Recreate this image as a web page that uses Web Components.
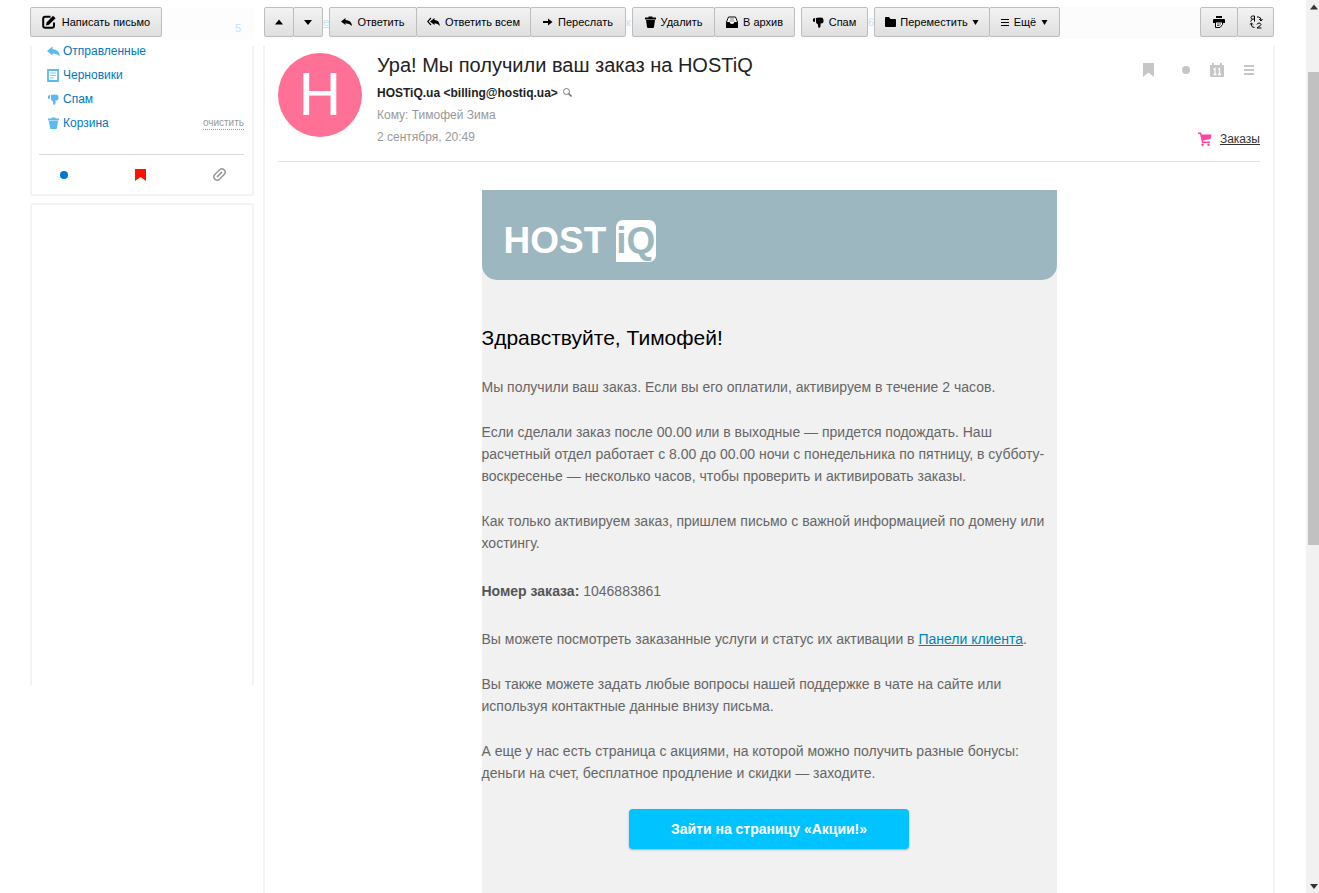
<!DOCTYPE html>
<html lang="ru">
<head>
<meta charset="utf-8">
<title>Ура! Мы получили ваш заказ на HOSTiQ</title>
<style>
    body {
        margin: 0;
        background: #fff;
        font-family: "Liberation Sans", Arial, sans-serif;
        font-size: 12px;
    }
</style>
</head>
<body>
<mail-app>
    <mail-toolbar slot="toolbar"></mail-toolbar>
    <mail-sidebar slot="sidebar"></mail-sidebar>
    <mail-letter slot="letter">
        <host-newsletter></host-newsletter>
    </mail-letter>
    <page-scroll slot="scroll"></page-scroll>
</mail-app>

<script>
const icons = {
    compose: [14, 14, '<path d="M8.500 1.800H3.200Q1.200 1.800 1.200 3.800V10.800Q1.200 12.800 3.200 12.800H10Q12 12.800 12 10.800V7.500" fill="none" stroke="currentColor" stroke-width="2"/><path d="M4 10.500L4.600 7.400L11 .8L13.600 3.200L7 9.800Z"/>'],
    up: [10, 8, '<path d="M1 6.500L5 1.500L9 6.500Z"/>'],
    down: [10, 8, '<path d="M1 2L5 7L9 2Z"/>'],
    caret: [7, 6, '<path d="M.5 1H6.500L3.500 6Z"/>'],
    reply: [11, 10, '<path d="M0 4.500L4.500 1V3Q10.500 3 11 9Q8.500 6.300 4.500 6.300V8Z"/>'],
    replyAll: [13, 10, '<path d="M3 4.500L7.500 1V3Q12.500 3 12.800 9Q11 6.300 7.500 6.300V8Z"/><path d="M4 1L.7 4.500L4 8" fill="none" stroke="currentColor" stroke-width="1.100"/>'],
    forward: [10, 10, '<path d="M0 4H5V1.500L9.500 5L5 8.500V6H0Z"/>'],
    trash: [11, 12, '<path d="M0 1.500H3.500V.5H7.500V1.500H11V3.500H0ZM1 4H10L9 11Q8.800 12 8 12H3Q2.200 12 2 11Z"/>'],
    archive: [12, 12, '<path d="M2.500 1H9.500L11.500 6V11H.5V6Z" fill="#fff" stroke="currentColor"/><path d="M0 6H3.500Q4 8 6 8T8.500 6H12V12H0Z"/><path d="M4 3H8M3.500 5H8.500" stroke="currentColor" opacity=".5"/>'],
    spam: [11, 11, '<path d="M0 1.800L2.200 1L1.800 5L0 4.500ZM3 1Q6 0 9.500 .8Q11 2.500 10.500 5Q10 6.500 7.500 6.500Q8 10.500 6 11Q4.800 10.500 5 7.500Q3.500 6.500 3 5.500Z"/>'],
    folder: [11, 10, '<path d="M0 1Q0 0 1 0H4L5.500 2H10Q11 2 11 3V9Q11 10 10 10H1Q0 10 0 9Z"/>'],
    lines: [8, 9, '<path d="M0 1.500H8M0 4.500H8M0 7.500H8" stroke="currentColor"/>'],
    print: [12, 12, '<path d="M3 0H9V2H3ZM0 4Q0 3 1 3H11Q12 3 12 4V7H0Z"/><path d="M2.500 6H9.500V8.500L7 11.500H2.500Z" fill="#fff" stroke="currentColor"/><path d="M4 8H8M4 9.500H6.500" stroke="currentColor" stroke-width=".7"/>'],
    translate: [14, 14, '<g fill="none" stroke="currentColor"><path d="M5.500 6.500V1H3.500Q2 1 2 2.500T3.500 4H5.500M3.500 4L1.500 6.500M8 9.500Q8.500 8 10 8T12 9.500Q12 10.500 8 13H12.500"/><path d="M8 2H9.500Q12 2 12 5.500M10.200 4L12 6L13.500 4M2.500 8.500V10Q2.500 12.500 5.500 12.500M.8 9.500L2.500 8L4 9.500"/></g>'],
    sent: [13, 11, '<path d="M0 5L5.500 .5V3Q12.500 3.500 13 10.500Q10 7.500 5.500 7.500V9.500Z"/>'],
    draft: [12, 13, '<path d="M1 1H11V12H1Z" fill="none" stroke="currentColor" stroke-width="1.800"/><path d="M3 4H9M3 6.500H9M3 9H7" stroke="currentColor" opacity=".8"/>'],
    dot: [8, 8, '<circle cx="4" cy="4" r="4"/>'],
    flag: [11, 12, '<path d="M0 0H11V12L5.500 8L0 12Z"/>'],
    clip: [15, 15, '<g transform="rotate(45 7.500 7.500)" fill="none" stroke="currentColor" stroke-width="1.500" stroke-linecap="round"><path d="M10.800 5V10.500Q10.800 14 7.500 14T4.200 10.500V4Q4.200 1 7.500 1T10.800 4V5M7.500 4.500V10.500"/></g>'],
    search: [9, 9, '<g fill="none" stroke="currentColor"><circle cx="3.500" cy="3.500" r="3"/><path d="M5.500 5.500L8.500 8.500" stroke-width="1.600"/></g>'],
    bookmark: [11, 14, '<path d="M0 0H11V14L5.500 9.500L0 14Z"/>'],
    calendar: [14, 14, '<path d="M0 2H2V0H4V2H10V0H12V2H14V13Q14 14 13 14H1Q0 14 0 13Z"/><path d="M3.500 6.500L5 5.500V11.500M8 6.500L9.500 5.500V11.500M3.500 11.500H6.500M8 11.500H11" fill="none" stroke="#fff" stroke-width="1.300"/>'],
    menu: [10, 10, '<path d="M0 1H10M0 5H10M0 9H10" stroke="currentColor" stroke-width="2"/>'],
    cart: [14, 14, '<path d="M0 .5H3L3.800 2.500H13.500L12.500 7L5 8.500L5.300 9.500H12V11H4L2 2H0Z"/><circle cx="4.500" cy="12.800" r="1.200"/><circle cx="10.500" cy="12.800" r="1.200"/>']
};

class MailIcon extends HTMLElement {
    connectedCallback() {
        const [width, height, shape] = icons[this.getAttribute('name')];
        this.attachShadow({ mode: 'open' }).innerHTML = `
            <style>
                :host { display: inline-flex; flex: none; }
                svg { display: block; }
            </style>
            <svg width="${width}" height="${height}" viewBox="0 0 ${width} ${height}" fill="currentColor" aria-hidden="true">${shape}</svg>
        `;
    }
}
customElements.define('mail-icon', MailIcon);


class MailApp extends HTMLElement {
    constructor() {
        super();
        this.attachShadow({ mode: 'open' }).innerHTML = `
            <style>
                :host {
                    display: flex;
                    height: 100vh;
                    overflow: hidden;
                }
                .page {
                    flex: 1;
                    min-width: 0;
                    display: flex;
                    flex-direction: column;
                    padding: 0 31px 0 30px;
                }
                .columns {
                    flex: 1;
                    min-height: 0;
                    display: grid;
                    grid-template-columns: 224px minmax(0, 1fr);
                    gap: 9px;
                }
            </style>
            <div class="page">
                <slot name="toolbar"></slot>
                <div class="columns">
                    <slot name="sidebar"></slot>
                    <slot name="letter"></slot>
                </div>
            </div>
            <slot name="scroll"></slot>
        `;
    }
}
customElements.define('mail-app', MailApp);


class MailButton extends HTMLElement {
    connectedCallback() {
        const label = this.getAttribute('label');
        const caret = this.hasAttribute('caret') ? '<mail-icon class="caret" name="caret"></mail-icon>' : '';
        this.attachShadow({ mode: 'open' }).innerHTML = `
            <style>
                :host { display: flex; }
                button {
                    display: flex;
                    align-items: center;
                    justify-content: center;
                    gap: var(--gap, 5px);
                    width: 100%;
                    height: 30px;
                    padding: 0;
                    border: 1px solid #bdbdbd;
                    border-radius: 2px;
                    background: linear-gradient(#f3f3f3, #dfdfdf);
                    color: #000;
                    font: 11px/16px "Liberation Sans", Arial, sans-serif;
                    white-space: nowrap;
                }
            </style>
            <button type="button" title="${this.title}">
                <mail-icon name="${this.getAttribute('icon')}"></mail-icon>
                ${label ? `<span>${label}</span>` : ''}
                ${caret}
            </button>
        `;
    }
}
customElements.define('mail-button', MailButton);


class MailToolbar extends HTMLElement {
    constructor() {
        super();
        this.attachShadow({ mode: 'open' }).innerHTML = `
            <style>
                /* the white strip below hides the top of the scrolled columns */
                :host {
                    display: flex;
                    position: relative;
                    z-index: 1;
                    height: 32px;
                    padding-top: 7px;
                    background: #fff;
                    box-shadow: 0 7px 0 #fff;
                }
                .side {
                    display: flex;
                    justify-content: space-between;
                    width: 224px;
                    margin-right: 10px;
                    background: #fdfdfd;
                }
                .count {
                    padding: 13px 13px 0 0;
                    color: #c3e3f7;
                    font-size: 11px;
                    line-height: 16px;
                }
                .bar {
                    flex: 1;
                    display: flex;
                    margin-right: 1px;
                    background: #fcfcfc;
                }
                .group { display: flex; }
                .group mail-button + mail-button { margin-left: -1px; }
                .ghost {
                    width: 6px;
                    overflow: hidden;
                    color: #c3e3f7;
                    font-size: 11px;
                    line-height: 30px;
                }
                .line { text-decoration: underline; }
                .grow { flex: 1; }
                .compose { width: 132px; --gap: 6px; }
                .arrow { width: 30px; }
                .reply { width: 88px; }
                .reply-all { width: 115px; }
                .forward { width: 96px; }
                .delete { width: 83px; }
                .archive { width: 81px; }
                .spam { width: 67px; }
                .move { width: 116px; --gap: 4px; }
                .more { width: 71px; }
                .print { width: 38px; }
                .translate { width: 37px; }
            </style>
            <div class="side">
                <mail-button class="compose" icon="compose" label="Написать письмо"></mail-button>
                <span class="count">5</span>
            </div>
            <div class="bar">
                <div class="group">
                    <mail-button class="arrow" icon="up" title="Предыдущее"></mail-button>
                    <mail-button class="arrow" icon="down" title="Следующее"></mail-button>
                </div>
                <span class="ghost line">е</span>
                <div class="group">
                    <mail-button class="reply" icon="reply" label="Ответить"></mail-button>
                    <mail-button class="reply-all" icon="replyAll" label="Ответить всем"></mail-button>
                    <mail-button class="forward" icon="forward" label="Переслать"></mail-button>
                </div>
                <span class="ghost">к</span>
                <div class="group">
                    <mail-button class="delete" icon="trash" label="Удалить"></mail-button>
                    <mail-button class="archive" icon="archive" label="В архив"></mail-button>
                </div>
                <span class="ghost"></span>
                <mail-button class="spam" icon="spam" label="Спам"></mail-button>
                <span class="ghost">6</span>
                <div class="group">
                    <mail-button class="move" icon="folder" label="Переместить" caret></mail-button>
                    <mail-button class="more" icon="lines" label="Ещё" caret></mail-button>
                </div>
                <span class="grow"></span>
                <div class="group">
                    <mail-button class="print" icon="print" title="Распечатать"></mail-button>
                    <mail-button class="translate" icon="translate" title="Перевести"></mail-button>
                </div>
            </div>
        `;
    }
}
customElements.define('mail-toolbar', MailToolbar);


class MailSidebar extends HTMLElement {
    constructor() {
        super();
        this.attachShadow({ mode: 'open' }).innerHTML = `
            <style>
                :host { display: block; }
                .panel {
                    box-sizing: border-box;
                    border: 2px solid #f3f3f3;
                    border-top: 0;
                    border-radius: 0 0 3px 3px;
                    padding: 0 8px 0 7px;
                }
                ul {
                    list-style: none;
                    margin: 0;
                    padding: 0 0 19px 7px;
                }
                li {
                    display: flex;
                    align-items: center;
                    height: 24px;
                }
                .pic {
                    display: flex;
                    justify-content: center;
                    width: 14px;
                    margin-right: 3px;
                    color: #5bbaf0;
                }
                a {
                    color: #0077c0;
                    font-size: 12px;
                    text-decoration: none;
                }
                .clear {
                    margin-left: auto;
                    padding: 0;
                    border: 0;
                    border-bottom: 1px dotted #999;
                    background: none;
                    color: #999;
                    font: 10px/12px "Liberation Sans", Arial, sans-serif;
                }
                .filters {
                    display: flex;
                    align-items: center;
                    justify-content: space-between;
                    height: 39px;
                    padding: 0 17px 0 21px;
                    border-top: 1px solid #d9d9d9;
                }
                .filters button {
                    display: flex;
                    padding: 0;
                    border: 0;
                    background: none;
                }
                .filters .new { color: #0077d0; }
                .filters .flag { color: #f10; }
                .filters .clip { color: #999; }
                .banner {
                    height: 54vh;
                    margin-top: 7px;
                    border-top: 2px solid #f3f3f3;
                    border-bottom: 0;
                    border-radius: 3px 3px 0 0;
                }
            </style>
            <nav class="panel">
                <ul>
                    <li><span class="pic"><mail-icon name="sent"></mail-icon></span><a href="#sent">Отправленные</a></li>
                    <li><span class="pic"><mail-icon name="draft"></mail-icon></span><a href="#drafts">Черновики</a></li>
                    <li><span class="pic"><mail-icon name="spam"></mail-icon></span><a href="#spam">Спам</a></li>
                    <li><span class="pic"><mail-icon name="trash"></mail-icon></span><a href="#trash">Корзина</a><button class="clear" type="button">очистить</button></li>
                </ul>
                <div class="filters">
                    <button class="new" type="button" title="Непрочитанные"><mail-icon name="dot"></mail-icon></button>
                    <button class="flag" type="button" title="С флажком"><mail-icon name="flag"></mail-icon></button>
                    <button class="clip" type="button" title="С вложениями"><mail-icon name="clip"></mail-icon></button>
                </div>
            </nav>
            <div class="panel banner"></div>
        `;
    }
}
customElements.define('mail-sidebar', MailSidebar);


class MailLetter extends HTMLElement {
    constructor() {
        super();
        this.attachShadow({ mode: 'open' }).innerHTML = `
            <style>
                :host {
                    display: flex;
                    flex-direction: column;
                    min-height: 0;
                    padding: 14px 13px 0;
                    border: solid #f3f3f3;
                    border-width: 0 2px;
                }
                header {
                    flex: none;
                    display: flex;
                    gap: 15px;
                    height: 108px;
                    margin-bottom: 28px;
                    border-bottom: 1px solid #e3e3e3;
                }
                .avatar {
                    display: flex;
                    align-items: center;
                    justify-content: center;
                    width: 84px;
                    height: 84px;
                    border-radius: 50%;
                    background: #ff7096;
                    color: #fff;
                    font: 60px/84px Roboto, sans-serif;
                }
                .info { flex: 1; color: #999; line-height: 22px; }
                h1 {
                    margin: 0 0 5px;
                    color: #222;
                    font-size: 20px;
                    font-weight: 400;
                    line-height: 24px;
                }
                .info .from { color: #222; font-weight: 700; }
                .from mail-icon { margin-left: 2px; color: #777; }
                .side {
                    display: flex;
                    flex-direction: column;
                    justify-content: space-between;
                    align-items: flex-end;
                    padding: 10px 0 14px;
                }
                .tools {
                    display: flex;
                    align-items: center;
                    gap: 20px;
                    padding-right: 6px;
                    color: #c6c6c6;
                }
                .tools button {
                    display: flex;
                    padding: 0;
                    border: 0;
                    background: none;
                    color: inherit;
                }
                .tools .mark { margin-right: 8px; }
                .orders {
                    display: flex;
                    align-items: center;
                    gap: 8px;
                    color: #ff43a4;
                }
                .orders a { color: #333; font-size: 12px; line-height: 16px; }
            </style>
            <header>
                <div class="avatar">H</div>
                <div class="info">
                    <h1>Ура! Мы получили ваш заказ на HOSTiQ</h1>
                    <div class="from">HOSTiQ.ua &lt;billing@hostiq.ua&gt; <mail-icon name="search"></mail-icon></div>
                    <div>Кому: Тимофей Зима</div>
                    <div>2 сентября, 20:49</div>
                </div>
                <div class="side">
                    <div class="tools">
                        <button class="mark" type="button" title="Флажок"><mail-icon name="bookmark"></mail-icon></button>
                        <button type="button" title="Непрочитанное"><mail-icon name="dot"></mail-icon></button>
                        <button type="button" title="Событие"><mail-icon name="calendar"></mail-icon></button>
                        <button type="button" title="Меню"><mail-icon name="menu"></mail-icon></button>
                    </div>
                    <div class="orders"><mail-icon name="cart"></mail-icon><a href="#orders">Заказы</a></div>
                </div>
            </header>
            <slot></slot>
        `;
    }
}
customElements.define('mail-letter', MailLetter);


class HostNewsletter extends HTMLElement {
    constructor() {
        super();
        this.attachShadow({ mode: 'open' }).innerHTML = `
            <style>
                :host {
                    display: block;
                    flex: 1;
                    align-self: center;
                    width: 100%;
                    max-width: 575px;
                    min-height: 0;
                    background: #f1f1f1;
                    color: #666;
                    font-size: 14px;
                    line-height: 22px;
                }
                .brand {
                    display: flex;
                    align-items: center;
                    gap: 10px;
                    height: 78px;
                    padding: 12px 22px 0;
                    border-radius: 0 0 15px 15px;
                    background: #9db7c0;
                    color: #fff;
                    font-size: 37px;
                    font-weight: 700;
                    line-height: 42px;
                }
                .brand b {
                    padding-right: 1px;
                    border-radius: 7px 7px 7px 0;
                    background: #fff;
                    color: #9db7c0;
                }
                h2 {
                    margin: 46px 0 26px;
                    color: #000;
                    font-size: 21px;
                    font-weight: 400;
                    line-height: 24px;
                }
                p { margin: 0 0 23px; }
                .order { margin: 26px 0; }
                .order b { color: #555; }
                p a { color: #0084b4; }
                .action {
                    display: block;
                    width: 280px;
                    margin: 25px auto;
                    border-radius: 4px;
                    background: #00c3ff;
                    box-shadow: 0 1px 2px #aaa;
                    color: #fff;
                    font-weight: 700;
                    line-height: 40px;
                    text-align: center;
                    text-decoration: none;
                }
            </style>
            <div class="brand"><span>HOST</span><b>iQ</b></div>
            <h2>Здравствуйте, Тимофей!</h2>
            <p>Мы получили ваш заказ. Если вы его оплатили, активируем в течение 2 часов.</p>
            <p>Если сделали заказ после 00.00 или в выходные — придется подождать. Наш<br>
            расчетный отдел работает с 8.00 до 00.00 ночи с понедельника по пятницу, в субботу-<br>
            воскресенье — несколько часов, чтобы проверить и активировать заказы.</p>
            <p>Как только активируем заказ, пришлем письмо с важной информацией по домену или<br>хостингу.</p>
            <p class="order"><b>Номер заказа:</b> 1046883861</p>
            <p>Вы можете посмотреть заказанные услуги и статус их активации в <a href="#panel">Панели клиента</a>.</p>
            <p>Вы также можете задать любые вопросы нашей поддержке в чате на сайте или<br>
            используя контактные данные внизу письма.</p>
            <p>А еще у нас есть страница с акциями, на которой можно получить разные бонусы:<br>
            деньги на счет, бесплатное продление и скидки — заходите.</p>
            <a class="action" href="#promo">Зайти на страницу «Акции!»</a>
        `;
    }
}
customElements.define('host-newsletter', HostNewsletter);


class PageScroll extends HTMLElement {
    constructor() {
        super();
        this.attachShadow({ mode: 'open' }).innerHTML = `
            <style>
                :host {
                    display: flex;
                    flex-direction: column;
                    align-items: flex-end;
                    width: 13px;
                    background: #f1f1f1;
                    color: #333;
                }
                .before { flex: 58; }
                .thumb {
                    flex: 473;
                    width: 11px;
                    background: #c1c1c1;
                }
                .after { flex: 334; }
                mail-icon { padding: 3px 0; }
            </style>
            <mail-icon name="up"></mail-icon>
            <div class="before"></div>
            <div class="thumb"></div>
            <div class="after"></div>
            <mail-icon name="down"></mail-icon>
        `;
    }
}
customElements.define('page-scroll', PageScroll);
</script>
</body>
</html>
